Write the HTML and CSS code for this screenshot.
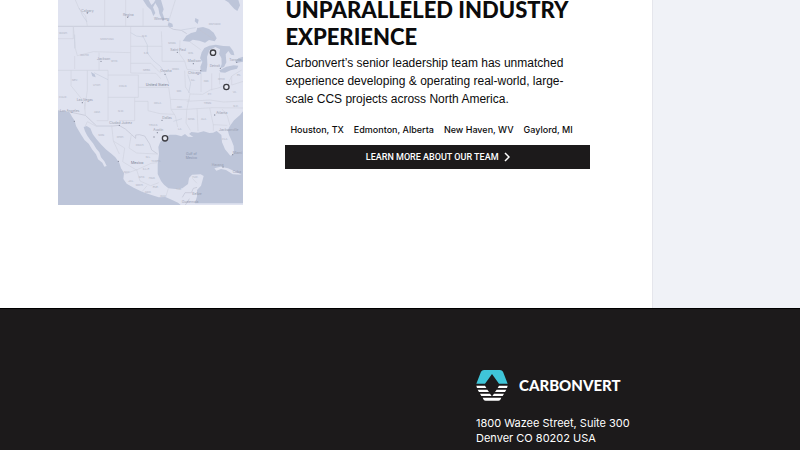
FILE: index.html
```
<!DOCTYPE html>
<html lang="en">
<head>
<meta charset="utf-8">
<meta name="viewport" content="width=device-width, initial-scale=1">
<title>Carbonvert</title>
<link rel="stylesheet" href="styles.css">
</head>
<body>
<main class="page">
  <section class="team">
    <svg class="map" viewBox="24 0 556 615" role="img" aria-label="Map of North America with team locations">
      <rect class="land" x="24" width="556" height="615"/>
      <g class="water">
        <path d="M24 331L40 334 58 336 66 350 74 362 78 378 92 402 104 421 116 431 127 449 138 463 144 478 157 488 163 500 170 498 163 484 153 472 148 457 139 446 129 430 121 420 112 407 105 394 101 381 110 378 121 385 128 402 139 417 154 434 169 449 185 462 196 472 208 489 213 505 222 519 220 537 230 551 251 563 276 575 302 584 326 592 346 591 365 599 384 608 392 615H24z"/>
        <path d="M327 462L325 441 331 425 345 413 359 404 378 404 394 409 405 402 414 410 430 411 417 402 424 396 444 398 461 394 478 399 489 398 500 393 514 405 516 427 525 448 541 467 552 461 551 438 544 420 537 405 533 391 540 377 552 361 570 345 580 332V610H435L441 589 441 570 453 557 461 528 452 523 426 524 417 534 414 552 397 565 376 567 355 565 342 554 333 543 323 522 323 492z"/>
        <path d="M398 123L409 107 423 99 438 95 442 84 459 81 477 87 491 98 500 115 494 124 477 120 465 128 448 122 428 119 419 125z"/>
        <path d="M469 215H452L451 200 457 185 450 175 455 157 463 144 478 137 497 134 520 138 539 139 550 154 553 166 543 164 535 153 527 163 529 187 522 201 511 205 515 192 514 174 507 162 510 148 496 141 478 151 471 170 472 194z"/>
        <path d="M508 211L529 200 551 196 565 197 561 206 542 211 525 218 511 217zM555 186L565 175 580 170V185L562 188z"/>
        <path d="M279 0H296L304 15 311 9 316 0H333L341 28 337 38 344 58 338 63 328 41 325 25 316 9 309 22 316 39 310 48 303 30 291 19zM356 67L367 71 369 80 359 82 353 76zM524 0H565L570 16 562 33 553 27 544 17 535 7zM436 54L446 59 443 72 434 64zM123 216L134 223 137 232 127 229z"/>
      </g>
      <path class="land" d="M493 505L512 500 534 505 557 515 575 524 548 523 528 510 513 507 499 512z"/>
      <g class="borders">
        <path class="strong" d="M24 79H354L370 88 394 91 410 101M441 84L494 120M60 336L106 346 140 378H188L207 376 226 387 244 403 257 415 257 405 268 404 284 408 299 432 305 450 323 462M397 592L405 578H424L430 565 441 562M406 615L418 596"/>
        <path d="M76 0L88 28 107 48 112 79M164 0V79M227 0V79M279 25V79M376 0L355 67M24 116H70V82M70 79L76 145 82 167 130 155 242 158M74 168V207M147 158V211M24 211H174V292H265V225H174M242 80V219L318 220 332 236M242 139H336L334 94M336 139V184H404M242 190H303L319 207 332 219M112 211V270L104 328M265 262H356L361 298 420 300M63 211V257L103 307 106 346M174 292V362H140M254 292V362H207M254 304H294V332L330 341 374 343M361 298L363 328 376 348 383 381M404 184L411 208 451 213M404 212L406 261 421 282 458 283 482 269 501 265 532 255 545 228 575 210M453 221V276M485 220V271M508 218L509 253M420 282L410 331 408 369 421 391M363 328H410L486 323 580 324M441 325L444 393M479 324L490 375 490 392M410 304L480 300 520 306 580 303M545 228V255L580 244M390 121L388 161 404 184M419 125L452 149M106 378L112 365 139 379M185 376L190 423 208 462M244 403L237 444 260 459 322 462M190 423L224 444 218 485 259 510 303 490 322 488M224 522L260 509 270 543 302 557 326 548M276 575L291 557M355 565L348 588M427 535L441 550M516 327L532 348 540 377M489 374L532 376"/>
        <path class="river" d="M88 24L97 45 111 66M242 98L259 108 280 111 292 135 292 159 309 181 331 199 345 220 357 251M413 224L422 249 416 279M394 90L437 83M370 364L396 356M74 104V145M174 239L132 218"/>
      </g>
      <g class="city">
        <text x="94" y="35">Calgary</text><text x="219" y="48">Regina</text><text x="312" y="59">Winnipeg</text>
        <text x="361" y="152">Saint Paul</text><text x="331" y="217">Omaha</text><text x="413" y="187">Madison</text>
        <text x="414" y="221">Chicago</text><text x="479" y="200">Detroit</text><text x="141" y="181">Jackson</text>
        <text x="80" y="304">Las Vegas</text><text x="30" y="335">Los Angeles</text><text x="178" y="371">Ciudad Juárez</text>
        <text x="337" y="357">Dallas</text><text x="310" y="393">Austin</text><text x="499" y="342">Atlanta</text>
        <text x="507" y="393">Jacksonville</text><text x="548" y="461">Miami</text><text x="485" y="498">Havana</text>
        <text x="548" y="520">Cuba</text><text x="395" y="608">Guatemala</text><text x="427" y="586">Belize</text>
        <text x="538" y="183">Toronto</text>
        <text class="country" x="287" y="258">United States</text><text class="country" x="243" y="493">Mexico</text>
        <text class="gulf" x="408" y="465">Gulf of</text><text class="gulf" x="407" y="478">Mexico</text>
      </g>
      <g class="state">
        <text x="476" y="74">ONTARIO</text><text x="151" y="120">MONTANA</text><text x="27" y="102">WASH.</text><text x="276" y="112">N.D.</text>
        <text x="281" y="161">S.D.</text><text x="355" y="133">MINN.</text><text x="91" y="169">IDAHO</text><text x="183" y="185">WYO.</text>
        <text x="279" y="214">NEBR.</text><text x="366" y="211">IOWA</text><text x="414" y="163">WIS.</text><text x="66" y="244">NEV.</text>
        <text x="129" y="259">UTAH</text><text x="207" y="260">COLO.</text><text x="423" y="244">ILL.</text><text x="461" y="247">IND.</text>
        <text x="504" y="239">OHIO</text><text x="380" y="276">MO.</text><text x="473" y="286">KY.</text><text x="461" y="311">TENN.</text>
        <text x="312" y="313">OKLA.</text><text x="380" y="325">ARK.</text><text x="550" y="320">N.C.</text><text x="548" y="278">VA.</text>
        <text x="132" y="339">ARIZ.</text><text x="204" y="337">N.M.</text><text x="296" y="377">TEXAS</text><text x="414" y="361">MISS.</text>
        <text x="453" y="361">ALA.</text><text x="384" y="389">LA.</text><text x="517" y="419">FLA.</text><text x="145" y="408">SON.</text>
        <text x="200" y="415">CHIH.</text><text x="257" y="438">COAH.</text><text x="287" y="474">N.L.</text><text x="304" y="487">TAMPS.</text>
        <text x="278" y="511">S.L.P.</text><text x="222" y="520">NAY.</text><text x="235" y="545">JAL.</text><text x="266" y="533">GTO.</text>
        <text x="257" y="557">MICH.</text><text x="308" y="564">PUE.</text><text x="331" y="591">OAX.</text><text x="378" y="571">TAB.</text><text x="426" y="535">YUC.</text>
        <text x="285" y="578">GRO.</text><text x="296" y="536">HGO.</text><text x="561" y="229">PA.</text><text x="27" y="295">CALIF.</text>
      </g>
      <g class="dots">
        <circle cx="112" cy="39" r="2"/><circle cx="233" cy="52" r="2"/><circle cx="382" cy="157" r="2"/><circle cx="345" cy="223" r="2"/>
        <circle cx="153" cy="184" r="2"/><circle cx="97" cy="308" r="2"/><circle cx="208" cy="376" r="2"/><circle cx="336" cy="361" r="2"/>
        <circle cx="322" cy="398" r="2"/><circle cx="312" cy="411" r="2"/><circle cx="452" cy="212" r="2"/><circle cx="430" cy="191" r="2"/>
        <circle cx="511" cy="205" r="2"/><circle cx="494" cy="345" r="2"/><circle cx="205" cy="484" r="2"/><circle cx="519" cy="501" r="2"/>
        <circle cx="548" cy="464" r="2"/><circle cx="73" cy="364" r="2"/><circle cx="560" cy="187" r="2"/>
      </g>
      <g class="pins">
        <circle cx="489" cy="158" r="8"/><circle cx="529" cy="261" r="8"/><circle cx="345" cy="415" r="8"/>
      </g>
    </svg>
    <div class="copy">
      <h2>Unparalleled industry experience</h2>
      <p>Carbonvert’s senior leadership team has unmatched experience developing &amp; operating real-world, large-scale CCS projects across North America.</p>
      <ul class="places">
        <li>Houston, TX</li><li>Edmonton, Alberta</li><li>New Haven, WV</li><li>Gaylord, MI</li>
      </ul>
      <a class="more" href="#team">Learn more about our team
        <svg viewBox="0 0 12 20" aria-hidden="true"><path d="M2 2l8 8-8 8"/></svg>
      </a>
    </div>
  </section>
  <aside class="rail"></aside>
</main>
<footer class="footer">
  <div class="contact">
    <a class="brand" href="#home">
      <svg viewBox="0 0 96 92" aria-hidden="true">
        <path fill="#3fc5d8" d="M24 0H72Q78 0 81 5L95 41H69L48 12 27 41H1L15 5Q18 0 24 0z"/>
        <path fill="#fff" d="M1 47H27L31 54H3zM5 59H34L39 66H9zM12 71H42L47 78H16zM20 83H76L73 89Q71 92 67 92H29Q25 92 23 89zM95 47H69L65 54H93zM91 59H62L57 66H87zM84 71H54L49 78H80z"/>
      </svg>
      <span>Carbonvert</span>
    </a>
    <address>1800 Wazee Street, Suite 300<br>Denver CO 80202 USA</address>
  </div>
</footer>
</body>
</html>
```

FILE: styles.css
```
* { box-sizing: border-box; }

body {
  margin: 0;
  min-height: 100vh;
  display: flex;
  flex-direction: column;
  overflow: hidden;
  background: #1c1a1b;
  color: #0b0b0c;
  font-family: Inter, "Liberation Sans", sans-serif;
}

.page {
  display: grid;
  grid-template-columns: 652fr 148fr;
  background: #fff;
}

.team {
  display: grid;
  grid-template-columns: 185fr 304fr;
  column-gap: 42px;
  align-items: start;
  padding: 0 62px 103px 58px;
}

.rail {
  border-left: 1px solid #e5e6ec;
  background: #f0f2f7;
}

.map { display: block; width: 100%; }
.land { fill: #e0e3f0; }
.water { fill: #bdc5d9; }
.borders { fill: none; stroke: #d0d3e0; stroke-width: 2; }
.borders .strong { stroke: #bfc3d2; stroke-width: 2; }
.borders .river { stroke: #c8cede; }
.city { font-size: 10px; fill: #989daf; }
.city .country { font-size: 11px; fill: #777d90; }
.city .gulf { fill: #8791ac; }
.state { font-size: 8px; fill: #adb2c2; }
.dots { fill: #858a9b; }
.pins { fill: #e9ebf3; stroke: #3d3d43; stroke-width: 4; }

h2 {
  margin: -4px 0 0;
  font: 900 22px/27px Lato, sans-serif;
  text-transform: uppercase;
}

.copy p {
  margin: 4px 0 0;
  font: 12px/18px "Liberation Sans", sans-serif;
}

.places {
  display: flex;
  gap: 10px;
  margin: 15px 0 0;
  padding: 0 5px;
  list-style: none;
  white-space: nowrap;
  font-size: 9px;
  font-weight: 500;
  line-height: 14px;
}

.more {
  display: flex;
  justify-content: center;
  align-items: center;
  gap: 5px;
  margin-top: 8px;
  background: #1c1a1b;
  color: #fff;
  font: 500 9px/24px Roboto, sans-serif;
  text-transform: uppercase;
  text-decoration: none;
}

.more svg {
  width: 6px;
  fill: none;
  stroke: currentColor;
  stroke-width: 3;
}

.footer {
  padding: 61px 24px 0 59.5%;
  border-top: 1px solid #000;
  color: #fff;
}

.brand {
  display: flex;
  align-items: center;
  gap: 11px;
  color: inherit;
  font: 900 15px/30px Lato, sans-serif;
  text-transform: uppercase;
  text-decoration: none;
}

.brand svg { width: 32px; }

address {
  margin-top: 15px;
  font: normal 11px/15px Inter, sans-serif;
}
```
